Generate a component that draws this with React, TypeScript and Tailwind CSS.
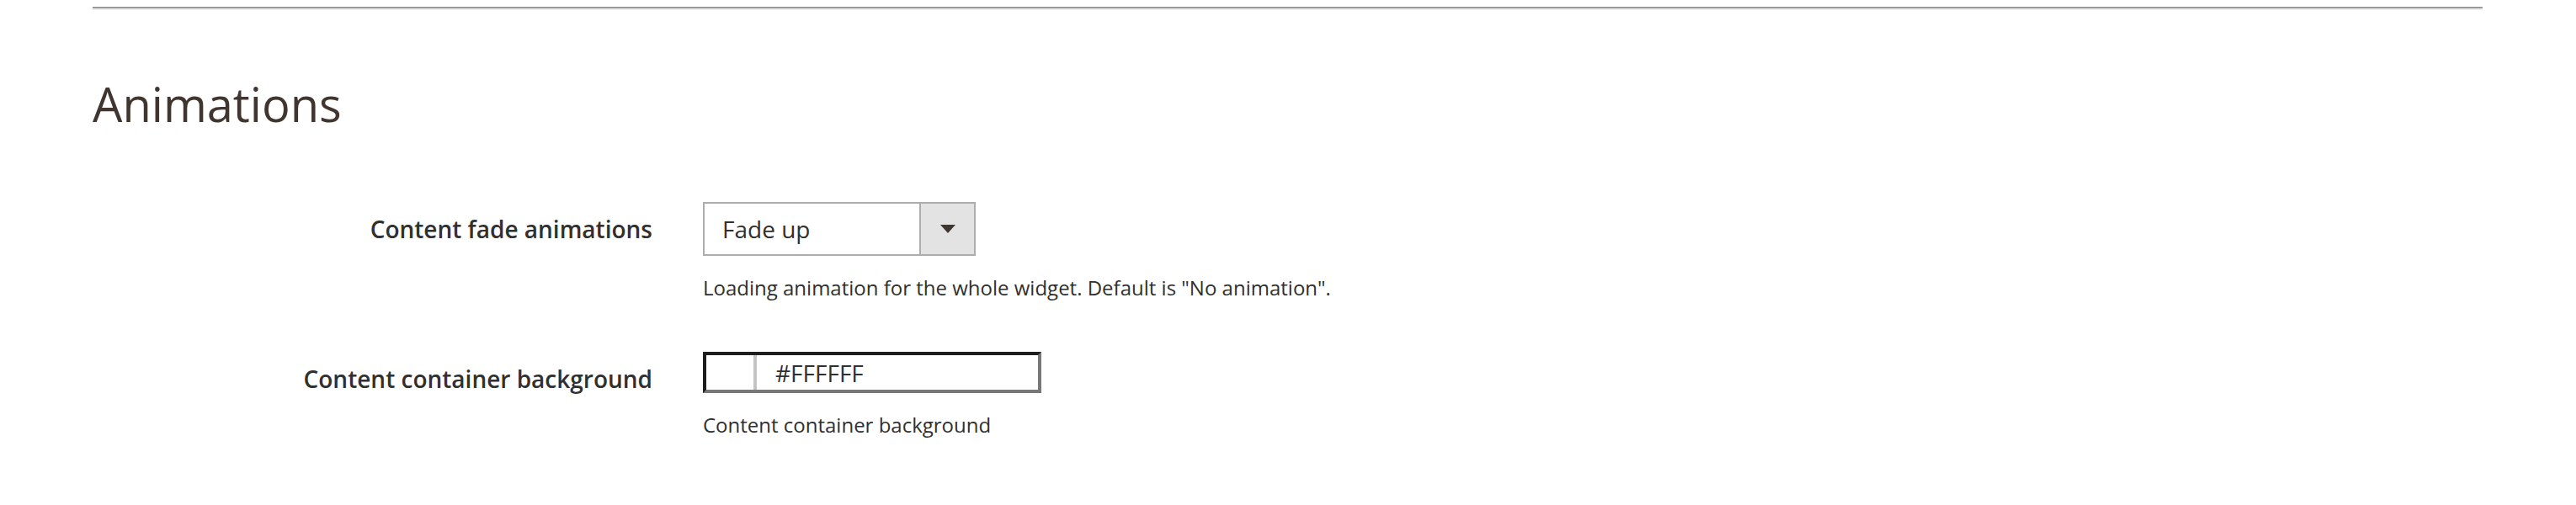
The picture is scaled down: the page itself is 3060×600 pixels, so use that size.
export default function App() {
  return (
    <div className="min-h-[600px] w-[3060px] bg-white font-['Open_Sans',sans-serif] text-[#303030]">
      <div className="ml-[110px] w-[2839px] pt-[8px]">
        {/* Section separator */}
        <div className="h-[2px] bg-[#999999]" />
        <div className="h-[2px] bg-[#ededed]" />

        <h2 className="mt-[78px] text-[56px] leading-[1.2] font-normal text-[#41362f]">Animations</h2>

        <div className="mt-[83px] grid grid-cols-[665px_1fr] gap-x-[60px]">
          {/* Content fade animations */}
          <div className="flex h-[64px] items-center justify-end text-[28px] font-semibold leading-[1.3]">
            Content fade animations
          </div>
          <div>
            <div className="flex h-[64px] w-[324px] border-2 border-[#adadad] bg-white">
              <div className="flex flex-1 items-center pl-[21px] text-[28px] leading-none">Fade up</div>
              <div className="flex w-[65px] items-center justify-center border-l-2 border-[#adadad] bg-[#e3e3e3]">
                <svg width="18" height="10" viewBox="0 0 18 10">
                  <path d="M0 0 L18 0 L9 10 Z" fill="#41362f" />
                </svg>
              </div>
            </div>
            <p className="mt-5 text-[24px] leading-[36px]">
              Loading animation for the whole widget. Default is "No animation".
            </p>
          </div>

          {/* Content container background */}
          <div className="mt-[58px] flex h-[64px] items-center justify-end text-[28px] font-semibold leading-[1.3]">
            Content container background
          </div>
          <div className="mt-[58px]">
            <div className="flex h-[49px] w-[402px] border-4 border-t-[#1e1e1e] border-l-[#1e1e1e] border-r-[#777777] border-b-[#777777] bg-white">
              <div className="w-[60px] border-r-[4px] border-[#c4c4c4] bg-white" />
              <div className="flex flex-1 items-center pl-[22px] text-[28px] leading-none">#FFFFFF</div>
            </div>
            <p className="mt-5 text-[24px] leading-[36px]">Content container background</p>
          </div>
        </div>
      </div>
    </div>
  )
}
